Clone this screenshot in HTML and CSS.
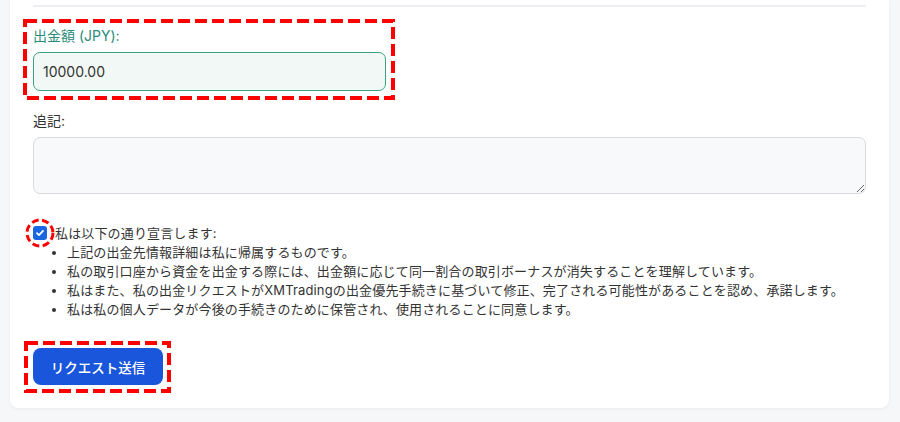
FILE: index.html
```html
<!DOCTYPE html>
<html lang="ja">
<head>
<meta charset="utf-8">
<title>出金</title>
<link rel="stylesheet" href="styles.css">
</head>
<body>
<div class="card">
  <hr class="divider">
  <div class="field amount">
    <label class="label label-ok" for="amount">出金額 (JPY):</label>
    <input id="amount" class="input input-ok" type="text" value="10000.00">
    <svg class="mark mark-amount" width="372" height="81" aria-hidden="true"><rect x="2" y="2" width="368" height="77" /></svg>
  </div>
  <div class="field note">
    <label class="label" for="note">追記:</label>
    <textarea id="note" class="textarea"></textarea>
  </div>
  <div class="declare">
    <div class="check-wrap">
      <span class="checkbox">
        <svg width="14" height="14" viewBox="0 0 14 14"><path d="M4 7.2 L6 9.1 L10 4.9" /></svg>
      </span>
      <svg class="mark-circle" width="30" height="30" aria-hidden="true"><circle cx="15" cy="15" r="13" /></svg>
    </div>
    <div class="declare-text">
      <p>私は以下の通り宣言します:</p>
      <ul>
        <li>上記の出金先情報詳細は私に帰属するものです。</li>
        <li>私の取引口座から資金を出金する際には、出金額に応じて同一割合の取引ボーナスが消失することを理解しています。</li>
        <li>私はまた、私の出金リクエストがXMTradingの出金優先手続きに基づいて修正、完了される可能性があることを認め、承諾します。</li>
        <li>私は私の個人データが今後の手続きのために保管され、使用されることに同意します。</li>
      </ul>
    </div>
  </div>
  <div class="actions">
    <button class="btn" type="button">リクエスト送信</button>
    <svg class="mark mark-btn" width="147" height="52" aria-hidden="true"><rect x="2" y="2" width="143" height="48" /></svg>
  </div>
</div>
</body>
</html>
```
FILE: styles.css
```css
* { box-sizing: border-box; }
html, body { margin: 0; padding: 0; }
body {
  background: #f6f7f9;
  font-family: "Inter", "Noto Sans CJK JP", sans-serif;
  color: #333;
  width: 900px;
  height: 422px;
  overflow: hidden;
}
.card {
  margin: 0 11px 0 10px;
  background: #fff;
  border-radius: 0 0 8px 8px;
  box-shadow: 0 1px 3px rgba(0,0,0,0.06);
  padding: 5px 23px 23px 23px;
}
.divider {
  border: 0;
  border-top: 2px solid #eceef2;
  margin: 0 0 19px 0;
}
.field {
  position: relative;
  display: flex;
  flex-direction: column;
  gap: 6px;
}
.label {
  font-size: 14px;
  line-height: 20px;
  color: #333;
}
.label-ok { color: #2b8b7a; }
.input {
  height: 39px;
  width: 353px;
  border-radius: 7px;
  padding: 0 9px;
  font: inherit;
  font-size: 14px;
  color: #333;
  outline: none;
}
.input-ok {
  border: 1px solid #3aa57f;
  background: #f2f8f5;
}
.note { margin-top: 20px; }
.textarea {
  height: 57px;
  width: 100%;
  border: 1px solid #d8dbe0;
  background: #f8f9fb;
  border-radius: 7px;
  font: inherit;
  resize: vertical;
  display: block;
}
.mark { position: absolute; pointer-events: none; }
.mark rect, .mark-circle circle {
  fill: none;
  stroke: #ff0000;
}
.mark rect { stroke-width: 4; stroke-dasharray: 12 5; }
.mark-amount { left: -10px; top: -7px; }
.declare {
  margin-top: 30px;
  display: flex;
  align-items: flex-start;
  gap: 8px;
  font-size: 13px;
  line-height: 19px;
  letter-spacing: 0.15px;
}
.check-wrap {
  position: relative;
  width: 14px;
  height: 14px;
  margin-top: 2px;
  flex: none;
}
.checkbox {
  display: block;
  width: 14px;
  height: 14px;
  border-radius: 3px;
  background: #1a66e0;
}
.checkbox svg { display: block; }
.checkbox path {
  fill: none;
  stroke: #fff;
  stroke-width: 1.8;
  stroke-linecap: round;
  stroke-linejoin: round;
}
.mark-circle {
  position: absolute;
  left: -8px;
  top: -8px;
}
.mark-circle circle { stroke-width: 3; stroke-dasharray: 7 3.5; }
.declare-text p { margin: 0; }
.declare-text ul {
  margin: 0;
  padding-left: 12px;
}
.declare-text li { padding-left: 0; }
.actions {
  position: relative;
  margin-top: 29px;
}
.btn {
  display: block;
  width: 130px;
  height: 37px;
  border: 0;
  border-radius: 8px;
  background: #1a56db;
  color: #fff;
  font-family: "Inter", "Noto Sans CJK JP", sans-serif;
  font-size: 13.5px;
  font-weight: 500;
  padding: 0;
}
.mark-btn { left: -9px; top: -7px; }
```
